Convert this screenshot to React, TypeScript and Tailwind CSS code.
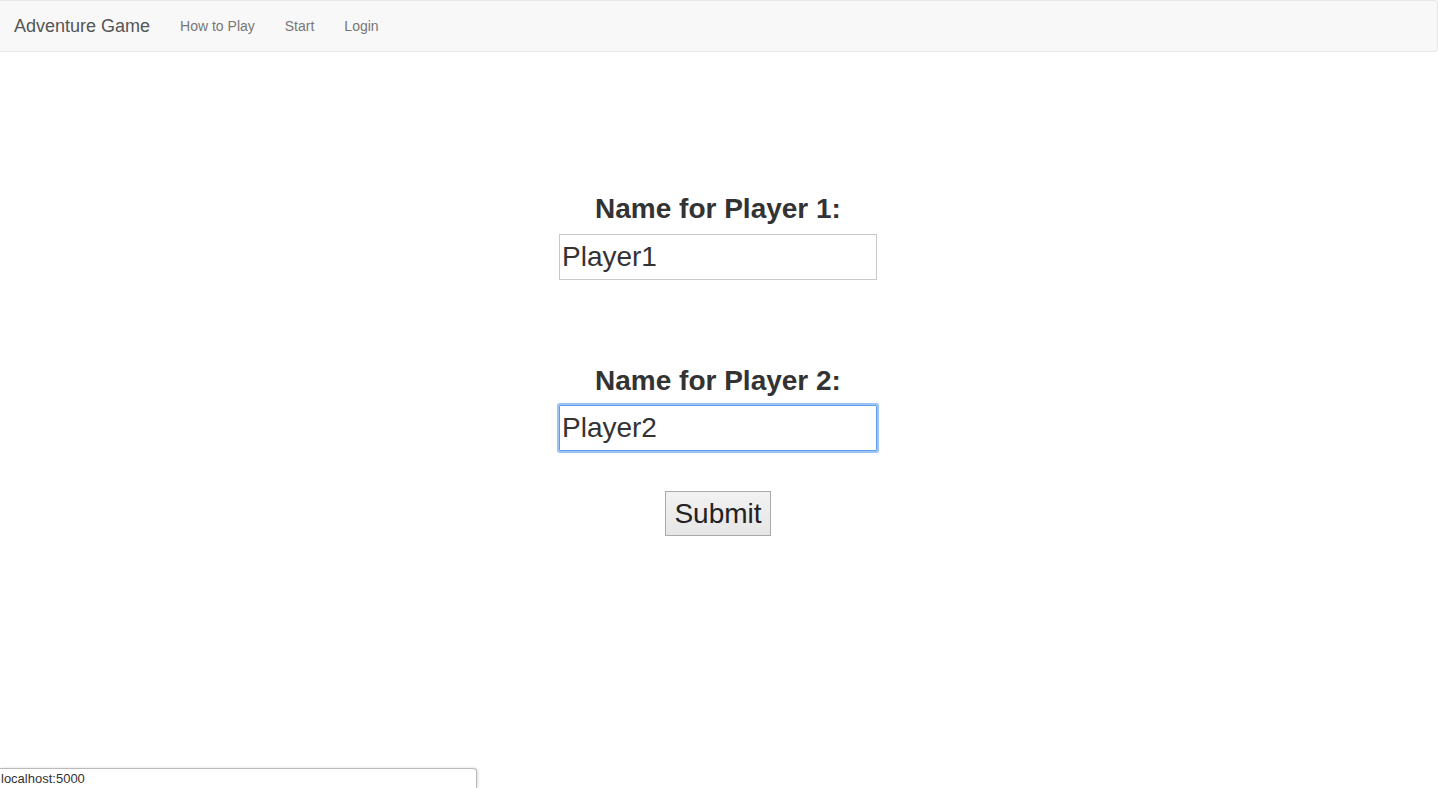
const App = () => {
  return (
    <div className="min-h-[788px] bg-white text-[#333] relative" style={{ fontFamily: '"Liberation Sans", Arial, sans-serif' }}>
      <nav className="h-[52px] bg-[#f8f8f8] border border-l-0 border-[#e7e7e7] rounded-r-[4px] flex items-center">
        <a className="pl-[14px] pr-[15px] text-[18px] text-[#555] leading-[20px]">Adventure Game</a>
        <ul className="flex">
          <li><a className="block px-[15px] text-[14px] text-[#777] leading-[20px]">How to Play</a></li>
          <li><a className="block px-[15px] text-[14px] text-[#777] leading-[20px]">Start</a></li>
          <li><a className="block px-[15px] text-[14px] text-[#777] leading-[20px]">Login</a></li>
        </ul>
      </nav>

      <form className="flex flex-col items-center pt-[141px] pr-[2px]">
        <h3 className="text-[28px] font-bold leading-[31px] mb-[10px]">Name for Player 1:</h3>
        <input
          defaultValue="Player1"
          className="w-[318px] h-[46px] border border-[#c8c8c8] px-[2px] text-[28px] text-[#333] outline-none"
        />

        <h3 className="text-[28px] font-bold leading-[31px] mb-[9px] mt-[85px]">Name for Player 2:</h3>
        <input
          defaultValue="Player2"
          className="w-[318px] h-[46px] border border-[#5e9ef1] ring-[2px] ring-[#9cc4f7] rounded-[1px] px-[2px] text-[28px] text-[#333] outline-none"
        />

        <button
          type="button"
          className="mt-[40px] w-[106px] h-[45px] border border-[#aaa] bg-gradient-to-b from-[#f2f2f2] to-[#e6e6e6] text-[28px] text-[#222] leading-none"
        >
          Submit
        </button>
      </form>

      <div className="absolute left-0 bottom-0 w-[477px] h-[20px] bg-white border-t border-r border-[#bbb] rounded-tr-[4px] shadow-[1px_0_3px_rgba(0,0,0,0.15)] pl-[1px] text-[13px] leading-[19px] text-[#333]">
        localhost:5000
      </div>
    </div>
  )
}

export default App
